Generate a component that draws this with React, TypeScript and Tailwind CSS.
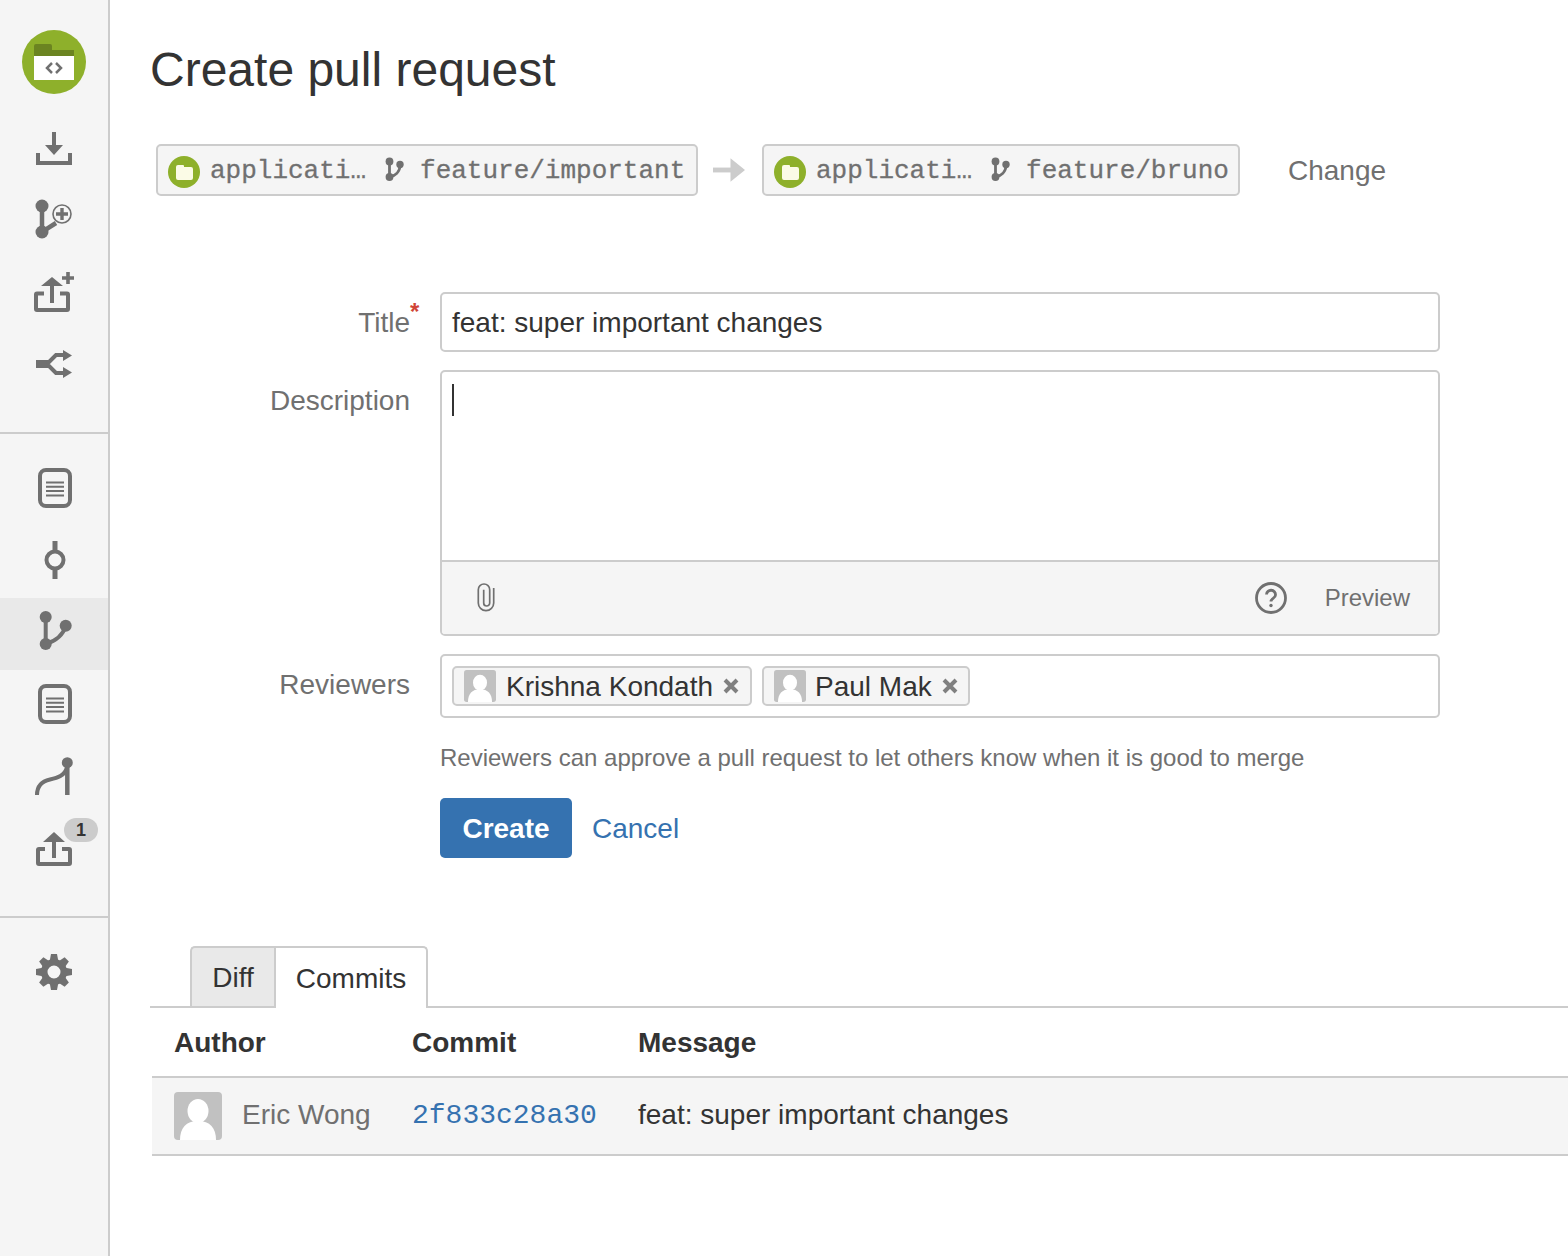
import React from 'react';

const G = '#707070';

const LogoIcon = () => (
  <svg width="64" height="64" viewBox="0 0 64 64">
    <circle cx="32" cy="32" r="32" fill="#8eb02b" />
    <path d="M12 26V16a2 2 0 0 1 2-2h14a2 2 0 0 1 2 2v4h22v6z" fill="#6b8421" />
    <rect x="12" y="26" width="40" height="24" fill="#fff" />
    <path d="M30 33l-5 5 5 5M34 33l5 5-5 5" fill="none" stroke={G} strokeWidth="2.500" />
  </svg>
);

const DownloadIcon = () => (
  <svg width="48" height="48" viewBox="0 0 48 48">
    <path d="M8 29v10h32V29" fill="none" stroke={G} strokeWidth="4" />
    <path d="M22 8h4v13h7l-9 10-9-10h7z" fill={G} />
  </svg>
);

const NewBranchIcon = () => (
  <svg width="48" height="48" viewBox="0 0 48 48">
    <circle cx="12" cy="12" r="6.500" fill={G} />
    <circle cx="12" cy="38" r="6.500" fill={G} />
    <path d="M12 12v26l14-9" fill="none" stroke={G} strokeWidth="4.500" />
    <circle cx="32" cy="20" r="9" fill="#f5f5f5" stroke={G} strokeWidth="1.600" />
    <path d="M32 14v12M26 20h12" stroke={G} strokeWidth="3.400" />
  </svg>
);

const ForkIcon = () => (
  <svg width="48" height="48" viewBox="0 0 48 48">
    <path d="M14 25.500H7a1 1 0 0 0-1 1V41a1 1 0 0 0 1 1h30a1 1 0 0 0 1-1V26.500a1 1 0 0 0-1-1h-7" fill="none" stroke={G} strokeWidth="4" />
    <path d="M22 9l11 9H24v17h-4V18h-9z" fill={G} />
    <path d="M38 4v12M32 10h12" stroke={G} strokeWidth="3.600" />
  </svg>
);

const CompareIcon = () => (
  <svg width="48" height="48" viewBox="0 0 48 48">
    <path d="M6 24h12" stroke={G} strokeWidth="8" />
    <path d="M17 24l9-9h9M17 24l9 9h9" fill="none" stroke={G} strokeWidth="4" />
    <path d="M33 10l9 5.500-9 5.500zM33 27l9 5.500-9 5.500z" fill={G} />
  </svg>
);

const DocIcon = () => (
  <svg width="48" height="48" viewBox="0 0 48 48">
    <rect x="10" y="6" width="30" height="36" rx="6" fill="none" stroke={G} strokeWidth="4" />
    <path d="M16 18.500h18M16 22.800h18M16 27.100h18M16 31.400h18" stroke={G} strokeWidth="2" />
  </svg>
);

const CommitIcon = () => (
  <svg width="48" height="48" viewBox="0 0 48 48">
    <path d="M25 5v10M25 33v10" stroke={G} strokeWidth="5" />
    <circle cx="25" cy="24" r="8.500" fill="none" stroke={G} strokeWidth="4" />
  </svg>
);

const PullRequestIcon = () => (
  <svg width="48" height="48" viewBox="0 0 48 48">
    <circle cx="15.700" cy="9" r="6" fill={G} />
    <circle cx="15.700" cy="36" r="6" fill={G} />
    <circle cx="35.700" cy="17.700" r="6" fill={G} />
    <path d="M15.700 9v27c10-3 17-8 20-18" fill="none" stroke={G} strokeWidth="4" />
  </svg>
);

const PathIcon = () => (
  <svg width="48" height="48" viewBox="0 0 48 48">
    <circle cx="37.300" cy="10.700" r="5.500" fill={G} />
    <path d="M37.300 11v32" stroke={G} strokeWidth="4.500" />
    <path d="M7 43C7 33 13 29 20 27.500 27 26 35 24 37 15" fill="none" stroke={G} strokeWidth="4" />
  </svg>
);

const UploadIcon = () => (
  <svg width="48" height="48" viewBox="0 0 48 48">
    <path d="M15 25H9a1 1 0 0 0-1 1v13a1 1 0 0 0 1 1h30a1 1 0 0 0 1-1V26a1 1 0 0 0-1-1h-7" fill="none" stroke={G} strokeWidth="4" />
    <path d="M24 8l11 10h-9v16h-4V18h-9z" fill={G} />
  </svg>
);

const GearIcon = () => (
  <svg width="36" height="36" viewBox="0 0 36 36">
    <circle cx="18" cy="18" r="9.750" fill="none" stroke={G} strokeWidth="6.500" />
    {[0, 45, 90, 135, 180, 225, 270, 315].map((a) => (
      <path key={a} d="M13.500 8L15 0h6l1.500 8z" fill={G} transform={`rotate(${a} 18 18)`} />
    ))}
  </svg>
);

const MiniBranch = () => (
  <svg width="20" height="26" viewBox="0 0 20 26" className="shrink-0">
    <circle cx="5.500" cy="4.500" r="3.900" fill={G} />
    <circle cx="5.500" cy="20" r="3.900" fill={G} />
    <circle cx="16" cy="7.500" r="3.700" fill={G} />
    <path d="M5.500 4v16C11 19 16 15 16 8" fill="none" stroke={G} strokeWidth="2.800" />
  </svg>
);

const RepoBadge = () => (
  <svg width="32" height="32" viewBox="0 0 32 32" className="shrink-0 mt-[4px]">
    <circle cx="16" cy="16" r="16" fill="#8eb02b" />
    <path d="M8 11a2 2 0 0 1 2-2h5a1 1 0 0 1 1 1v1h7a2 2 0 0 1 2 2v9a2 2 0 0 1-2 2H10a2 2 0 0 1-2-2z" fill="#fbfbe6" />
  </svg>
);

const Person = ({ size }: { size: number }) => (
  <svg width={size} height={size} viewBox="0 0 48 48" className="shrink-0">
    <rect width="48" height="48" rx="4" fill="#c1c1c1" />
    <ellipse cx="24" cy="19" rx="10.500" ry="12" fill="#fff" />
    <path d="M6 48c0-12 6-19 18-19s18 7 18 19z" fill="#fff" />
  </svg>
);

const Paperclip = () => (
  <svg width="18" height="30" viewBox="-1 -1 18 30">
    <path d="M15.700 4V19A7.700 7.700 0 0 1 .3 19V5.700A5.700 5.700 0 0 1 11.700 5.700V19A3 3 0 0 1 5.700 19V5.700" fill="none" stroke={G} strokeWidth="1.700" />
  </svg>
);

const HelpIcon = () => (
  <svg width="34" height="34" viewBox="0 0 34 34" fill="none" stroke={G}>
    <circle cx="17" cy="17" r="14.500" strokeWidth="2.800" />
    <path d="M12.500 13.500a4.500 4.500 0 0 1 9 .5c0 3-4.500 3.500-4.500 6.500" strokeWidth="2.800" />
    <circle cx="17" cy="24.500" r="1.700" fill={G} stroke="none" />
  </svg>
);

const SideItem = ({ children, active, up }: { children: React.ReactNode; active?: boolean; up?: boolean }) => (
  <div className={`relative h-[72px] flex items-center justify-center ${up ? 'pb-[4px]' : ''} ${active ? 'bg-[#e9e9e9]' : ''}`}>
    {children}
  </div>
);

const BranchBox = ({ branch, width }: { branch: string; width: string }) => (
  <div className={`${width} h-[52px] shrink-0 flex items-center pl-[10px] bg-[#f5f5f5] border-2 border-[#ccc] rounded-[5px] font-['Liberation_Mono',monospace] text-[26px] text-[#707070] [-webkit-text-stroke:0.3px_#707070]`}>
    <RepoBadge />
    <span className="ml-[10px] pt-[2px]">applicati…</span>
    <span className="ml-[18px] flex"><MiniBranch /></span>
    <span className="ml-[16px] pt-[2px]">{branch}</span>
  </div>
);

const Chip = ({ name, width, nameGap }: { name: string; width: string; nameGap: string }) => (
  <div className={`${width} h-[40px] flex items-center pl-[10px] bg-[#f5f5f5] border-2 border-[#ccc] rounded-[5px]`}>
    <Person size={32} />
    <span className={`${nameGap} pt-[2px] text-[28px] text-[#333]`}>{name}</span>
    <svg width="16" height="16" viewBox="0 0 16 16" className="ml-[10px]">
      <path d="M2 2l12 12M14 2L2 14" stroke="#808080" strokeWidth="4" />
    </svg>
  </div>
);

export default function App() {
  return (
    <div className="flex min-h-[1256px] bg-white font-['Liberation_Sans',Arial,sans-serif] text-[28px] text-[#333]">
      <aside className="w-[110px] shrink-0 bg-[#f5f5f5] border-r-2 border-[#ccc]">
        <div className="pt-[30px] pb-[18px] flex justify-center"><LogoIcon /></div>
        <SideItem><DownloadIcon /></SideItem>
        <SideItem up><NewBranchIcon /></SideItem>
        <SideItem><ForkIcon /></SideItem>
        <SideItem><CompareIcon /></SideItem>
        <div className="mt-[32px] mb-[20px] h-[2px] bg-[#ccc]" />
        <SideItem up><DocIcon /></SideItem>
        <SideItem up><CommitIcon /></SideItem>
        <SideItem up active><PullRequestIcon /></SideItem>
        <SideItem up><DocIcon /></SideItem>
        <SideItem up><PathIcon /></SideItem>
        <SideItem up>
          <UploadIcon />
          <span className="absolute left-[64px] top-[4px] w-[34px] h-[24px] rounded-full bg-[#ccc] flex items-center justify-center text-[18px] font-bold text-[#333]">1</span>
        </SideItem>
        <div className="mt-[30px] mb-[18px] h-[2px] bg-[#ccc]" />
        <SideItem><GearIcon /></SideItem>
      </aside>

      <main className="flex-1 min-w-0 pl-[40px] pt-[40px]">
        <h1 className="text-[48px] leading-[60px] font-normal">Create pull request</h1>

        <div className="mt-[44px] ml-[6px] flex items-center">
          <BranchBox branch="feature/important" width="w-[542px]" />
          <svg width="33" height="26" viewBox="0 0 34 26" className="ml-[15px] mr-[16px] shrink-0">
            <path d="M0 13h20" stroke="#ccc" strokeWidth="5" />
            <path d="M18 1l15 12-15 12z" fill="#ccc" />
          </svg>
          <BranchBox branch="feature/bruno" width="w-[478px]" />
          <span className="ml-[48px] pt-[2px] text-[#707070]">Change</span>
        </div>

        <div className="mt-[96px] grid grid-cols-[260px_1000px] gap-x-[30px]">
          <label className="relative text-right text-[#707070] pt-[10px]">
            Title
            <span className="absolute left-[260px] top-[2px] text-[24px] font-bold text-[#d04437]">*</span>
          </label>
          <div className="h-[60px] flex items-center px-[10px] pt-[2px] border-2 border-[#ccc] rounded-[5px]">feat: super important changes</div>

          <label className="text-right text-[#707070] mt-[18px] pt-[10px]">Description</label>
          <div className="mt-[18px] h-[266px] flex flex-col border-2 border-[#ccc] rounded-[5px] overflow-hidden">
            <div className="flex-1 px-[10px] pt-[12px]">
              <div className="w-[2px] h-[32px] bg-[#333]" />
            </div>
            <div className="h-[74px] flex items-center bg-[#f5f5f5] border-t-2 border-[#ccc] pl-[35px] pr-[28px]">
              <Paperclip />
              <div className="ml-auto flex items-center">
                <HelpIcon />
                <span className="ml-[37px] text-[24px] text-[#707070]">Preview</span>
              </div>
            </div>
          </div>

          <label className="text-right text-[#707070] mt-[18px] pt-[10px]">Reviewers</label>
          <div className="mt-[18px] h-[64px] flex items-center gap-[10px] pl-[10px] border-2 border-[#ccc] rounded-[5px]">
            <Chip name="Krishna Kondath" width="w-[300px]" nameGap="ml-[10px]" />
            <Chip name="Paul Mak" width="w-[208px]" nameGap="ml-[9px]" />
          </div>

          <div />
          <div>
            <p className="mt-[24px] leading-[32px] text-[24px] text-[#707070] whitespace-nowrap">Reviewers can approve a pull request to let others know when it is good to merge</p>
            <div className="mt-[24px] flex items-center">
              <button className="w-[132px] h-[60px] pt-[2px] rounded-[5px] bg-[#3572b0] text-white font-bold">Create</button>
              <a className="ml-[20px] pt-[2px] text-[#3572b0]">Cancel</a>
            </div>
          </div>
        </div>

        <div className="mt-[88px] pl-[40px] flex h-[62px] border-b-2 border-[#ccc]">
          <div className="w-[84px] h-[62px] flex items-center justify-center pt-[2px] bg-[#e9e9e9] border-2 border-r-0 border-[#ccc] rounded-tl-[5px]">Diff</div>
          <div className="w-[154px] h-[62px] flex items-center justify-center pt-[2px] bg-white border-2 border-b-0 border-[#ccc] rounded-tr-[5px]">Commits</div>
        </div>

        <div className="ml-[2px] grid grid-cols-[238px_226px_1fr] pl-[22px] pt-[2px] h-[70px] items-center font-bold border-b-2 border-[#ccc]">
          <span>Author</span>
          <span>Commit</span>
          <span>Message</span>
        </div>
        <div className="ml-[2px] grid grid-cols-[238px_226px_1fr] pl-[22px] h-[78px] items-center bg-[#f5f5f5] border-b-2 border-[#ccc]">
          <div className="flex items-center">
            <Person size={48} />
            <span className="ml-[20px] pb-[2px] text-[#707070]">Eric Wong</span>
          </div>
          <a className="font-['Liberation_Mono',monospace] text-[#3572b0] text-[28px]">2f833c28a30</a>
          <span className="pb-[2px]">feat: super important changes</span>
        </div>
      </main>
    </div>
  );
}
